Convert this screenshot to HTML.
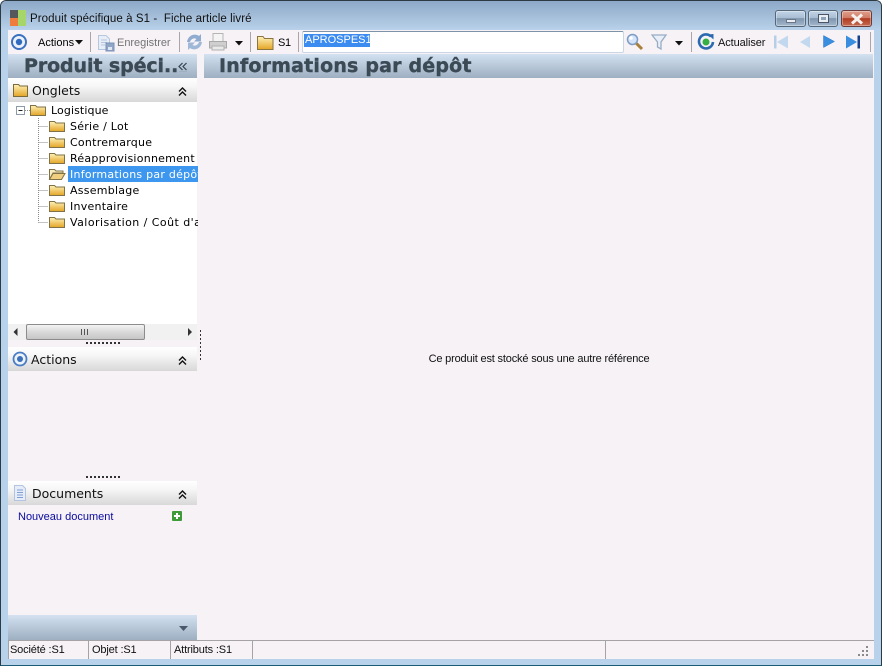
<!DOCTYPE html>
<html lang="fr"><head><meta charset="utf-8"><title>Fiche article livré</title>
<style>
html,body{margin:0;padding:0;width:882px;height:666px;overflow:hidden;background:#fff}
*{box-sizing:border-box}
.a{position:absolute;white-space:nowrap}
#win{position:absolute;left:0;top:0;width:882px;height:666px;overflow:hidden;border-radius:6px 6px 0 0;background:#b9d2ec;border:1px solid #2c3a44;border-bottom:1px solid #1d5a74}
#root{position:absolute;left:0;top:0;width:882px;height:666px;overflow:hidden;font-family:"Liberation Sans",sans-serif;font-size:11px;color:#000}
.sep{position:absolute;top:32px;width:1px;height:20px;background:#a9a6aa}
.t{font-family:"DejaVu Sans",sans-serif;font-size:11px;letter-spacing:.25px;line-height:16px;position:absolute;white-space:nowrap}
.hd{position:absolute;background:linear-gradient(#d3e1f1,#9dafc1)}
.bt{font-family:"DejaVu Sans",sans-serif;font-weight:bold;font-size:19px;color:#3b4a55;position:absolute;white-space:nowrap;line-height:24px;-webkit-text-stroke:.4px #3b4a55}
.ph{position:absolute;left:8px;width:189px;height:24px;background:linear-gradient(#fff 0%,#f7f6f7 35%,#d8d8d8 100%)}
.pt{position:absolute;font-family:"DejaVu Sans",sans-serif;font-size:12.5px;white-space:nowrap;line-height:24px;color:#111}
.dots{position:absolute;height:2px;width:36px;background:repeating-linear-gradient(90deg,#333 0 2px,transparent 2px 4px)}
.st{position:absolute;top:641px;height:18px;line-height:18px;white-space:nowrap;font-size:11px;letter-spacing:-.15px;color:#111}
.sl{position:absolute;top:641px;height:18px;width:1px;background:#a5a3a6}
.btn{position:absolute;top:10px;height:17px;border:1px solid #56677a;border-radius:3px;background:linear-gradient(#c3d4e6 0,#a9bdd3 45%,#7f95ad 50%,#a3b8cd 100%);box-shadow:inset 0 0 0 1px rgba(255,255,255,.35)}
</style></head><body>
<div id="root">
<div id="win"></div>
<div class="a" style="left:1px;top:1px;width:880px;height:29px;background:linear-gradient(#8da9c7,#b9d1ea);border-radius:5px 5px 0 0"></div>

<!-- Client background -->
<div class="a" style="left:8px;top:30px;width:866px;height:629px;background:#f6f2f6"></div>

<!-- Title bar -->
<svg class="a" style="left:10px;top:10px" width="16" height="16"><rect width="8" height="8" fill="#55585a"/><rect x="8" width="8" height="16" fill="#a6d66a"/><rect y="8" width="8" height="8" fill="#ee7c3c"/></svg>
<div class="a" style="left:30px;top:12px;font-size:11.5px;line-height:14px;letter-spacing:.08px;color:#101010">Produit spécifique à S1 -&nbsp; Fiche article livré</div>
<div class="btn" style="left:775px;width:31px"><div class="a" style="left:10px;top:8px;width:10px;height:4px;background:#e9eef4;border:1px solid #6a7686"></div></div>
<div class="btn" style="left:808px;width:30px"><div class="a" style="left:9px;top:3px;width:11px;height:9px;background:#e9eef4;border:1px solid #4a5666"></div><div class="a" style="left:12px;top:6px;width:5px;height:3px;background:#8ea3b8"></div></div>
<div class="btn" style="left:841px;width:31px;border-color:#6b3a3a;background:linear-gradient(#e0a08e 0,#d07c66 45%,#b03c22 50%,#c66a50 100%)">
<svg class="a" style="left:8px;top:2px" width="14" height="12"><path d="M2 1.500L12 10.500M12 1.500L2 10.500" stroke="#f3f0ee" stroke-width="3"/></svg></div>

<!-- Toolbar -->
<svg class="a" style="left:10px;top:33px" width="18" height="18"><circle cx="9" cy="9" r="7" fill="#eef3fa" stroke="#3a72c0" stroke-width="2"/><circle cx="9" cy="9" r="3.200" fill="#2f6cc0"/></svg>
<div class="a" style="left:38px;top:36px;line-height:14px">Actions</div>
<svg class="a" style="left:75px;top:40px" width="8" height="5"><path d="M0 0H8L4 4.500Z" fill="#111"/></svg>
<div class="sep" style="left:90px"></div>
<svg class="a" style="left:97px;top:34px" width="18" height="18"><path d="M1.500 1.500H9L12.500 5V15.500H1.500Z" fill="#e8eef7" stroke="#b6c6dc"/><path d="M4 6H10M4 8.500H10M4 11H8" stroke="#b4c4dc"/><rect x="9" y="9" width="8" height="8" fill="#8fa6c8" stroke="#7a90b4"/><rect x="11" y="13" width="4" height="3" fill="#dde6f2"/></svg>
<div class="a" style="left:117px;top:36px;line-height:14px;letter-spacing:-.02px;color:#747474">Enregistrer</div>
<div class="sep" style="left:179px"></div>
<svg class="a" style="left:186px;top:33px" width="17" height="18"><path d="M1 9C2 2 9 0 13 3L15 1V8.500H8L10.500 6C8 4.500 5 6 4 9Z" fill="#8fabcf"/><path d="M16 9C15 16 8 18 4 15L2 17V9.500H9L6.500 12C9 13.500 12 12 13 9Z" fill="#a0b8d8"/></svg>
<svg class="a" style="left:208px;top:32px" width="20" height="20"><rect x="5" y="1.500" width="10" height="8" fill="#f4f4f4" stroke="#b5b5b5"/><path d="M1.500 9.500H18.500V16H1.500Z" fill="#cfcfcf" stroke="#a9a9a9"/><rect x="4" y="14" width="12" height="4" fill="#e9e9e9" stroke="#b0b0b0"/></svg>
<svg class="a" style="left:235px;top:41px" width="8" height="5"><path d="M0 0H8L4 4.500Z" fill="#111"/></svg>
<div class="sep" style="left:250px"></div>
<svg class="a" style="left:257px;top:34px" width="17" height="16"><path d="M.5 2.500H6L7.500 4.500H16V15.500H.5Z" fill="url(#f1)" stroke="#8a7440"/><defs><linearGradient id="f1" x1="0" y1="0" x2="0" y2="1"><stop offset="0" stop-color="#fff2b8"/><stop offset="1" stop-color="#e3a424"/></linearGradient></defs></svg>
<div class="a" style="left:278px;top:36px;line-height:14px;letter-spacing:-.3px">S1</div>
<div class="sep" style="left:298px"></div>
<div class="a" style="left:302px;top:31px;width:322px;height:22px;background:#fff;border:1px solid #c8d6e6;border-top:1px solid #7d93a8;border-radius:2px"></div>
<div class="a" style="left:304px;top:34px;height:13px;width:66px;background:#3b8bf0"></div>
<div class="a" style="left:305px;top:33px;line-height:15px;font-size:11px;color:#fff;letter-spacing:0">APROSPES1</div>
<svg class="a" style="left:626px;top:33px" width="18" height="18"><path d="M10 10L16 16" stroke="#a8803c" stroke-width="3"/><circle cx="6.500" cy="6.500" r="5" fill="#d4e4fa" stroke="#7f9cc4" stroke-width="1.500"/><circle cx="5" cy="5" r="1.800" fill="#fff"/></svg>
<svg class="a" style="left:651px;top:33px" width="17" height="18"><path d="M1 2H15L10 9V16L6.500 14V9Z" fill="#e8eff8" stroke="#98adc4" stroke-width="1.300"/></svg>
<svg class="a" style="left:675px;top:41px" width="8" height="5"><path d="M0 0H8L4 4.500Z" fill="#111"/></svg>
<div class="sep" style="left:691px"></div>
<svg class="a" style="left:697px;top:33px" width="18" height="18"><path d="M14 3.500A7 7 0 1 0 16 9" fill="none" stroke="#2c6ab0" stroke-width="2.600"/><path d="M11 1.500L16.500 1V6.500Z" fill="#2c6ab0"/><circle cx="9" cy="9" r="3.500" fill="#34b044"/></svg>
<div class="a" style="left:718px;top:36px;line-height:14px;letter-spacing:-.1px;color:#111">Actualiser</div>
<svg class="a" style="left:773px;top:34px" width="16" height="16"><rect x="1" y="1.500" width="2.500" height="13" fill="#b6cfe8"/><path d="M15 1.500V14.500L4 8Z" fill="#c2d8ee"/></svg>
<svg class="a" style="left:798px;top:35px" width="14" height="14"><path d="M12 1V13L2 7Z" fill="#c2d8ee"/></svg>
<svg class="a" style="left:822px;top:34px" width="14" height="15"><path d="M1.500 1.500V13.500L12.500 7.500Z" fill="#3a8ee0" stroke="#2f78c4" stroke-width=".5"/></svg>
<svg class="a" style="left:845px;top:34px" width="16" height="16"><path d="M1 1.500V14.500L12 8Z" fill="#3a8ee0"/><rect x="12.500" y="1.500" width="2.500" height="13" fill="#16408c"/></svg>
<div class="sep" style="left:870px"></div>

<!-- Header bands -->
<div class="hd" style="left:8px;top:54px;width:189px;height:24px"></div>
<div class="hd" style="left:204px;top:54px;width:669px;height:24px"></div>
<div class="bt" style="left:24px;top:54px;width:154px;overflow:hidden;letter-spacing:-.1px">Produit spéci..</div>
<svg class="a" style="left:178px;top:62px" width="10" height="10"><path d="M4.500 1L1 4.500L4.500 8M8.500 1L5 4.500L8.500 8" fill="none" stroke="#34424e" stroke-width="1.200"/><path d="M1 9.500H9" stroke="#9fb0c0"/></svg>
<div class="bt" style="left:219px;top:54px;letter-spacing:.18px">Informations par dépôt</div>

<!-- Tree panel -->
<div class="a" style="left:8px;top:78px;width:189px;height:262px;background:#fff"></div>
<div class="ph" style="top:78px"></div>
<svg class="a" style="left:13px;top:83px" width="15" height="14"><path d="M.5 1.500H5.500L7 3H14.500V13.500H.5Z" fill="url(#f1)" stroke="#7a6a3c"/></svg>
<div class="pt" style="left:32px;top:79px">Onglets</div>
<svg class="a" style="left:178px;top:87px" width="9" height="10"><path d="M1 4.500L4.500 1L8 4.500M1 8.500L4.500 5L8 8.500" fill="none" stroke="#111" stroke-width="1.400"/></svg>

<!-- tree lines -->
<svg class="a" style="left:8px;top:102px" width="190" height="130">
<g fill="none" stroke="#8a8a8a" stroke-dasharray="1 1">
<path d="M30.500 16V120.500"/>
<path d="M30.500 24.500H40M30.500 40.500H40M30.500 56.500H40M30.500 72.500H40M30.500 88.500H40M30.500 104.500H40M30.500 120.500H40"/>
<path d="M17 8.500H22"/>
</g>
<rect x="8.500" y="4.500" width="8" height="8" fill="#fff" stroke="#8e9aa6"/><path d="M10.500 8.500H14.500" stroke="#222"/>
<g>
<path d="M22.500 3.500H27.500L29 5H37.500V13.500H22.500Z" fill="url(#f1)" stroke="#7f7247"/>
<path d="M41.500 19.500H46.500L48 21H56.500V29.500H41.500Z" fill="url(#f1)" stroke="#7f7247"/>
<path d="M41.500 35.500H46.500L48 37H56.500V45.500H41.500Z" fill="url(#f1)" stroke="#7f7247"/>
<path d="M41.500 51.500H46.500L48 53H56.500V61.500H41.500Z" fill="url(#f1)" stroke="#7f7247"/>
<path d="M41.500 67.500H46.500L48 69H55V71H45L41.500 77.500Z" fill="#f9ecc0" stroke="#7f7247"/><path d="M45 71.500H57L53.500 77.500H41.500Z" fill="#f0cf80" stroke="#7f7247"/>
<path d="M41.500 83.500H46.500L48 85H56.500V93.500H41.500Z" fill="url(#f1)" stroke="#7f7247"/>
<path d="M41.500 99.500H46.500L48 101H56.500V109.500H41.500Z" fill="url(#f1)" stroke="#7f7247"/>
<path d="M41.500 115.500H46.500L48 117H56.500V125.500H41.500Z" fill="url(#f1)" stroke="#7f7247"/>
</g>
</svg>
<div class="t" style="left:51px;top:103px;letter-spacing:.1px">Logistique</div>
<div class="t" style="left:70px;top:119px">Série / Lot</div>
<div class="t" style="left:70px;top:135px">Contremarque</div>
<div class="t" style="left:70px;top:151px">Réapprovisionnement</div>
<div class="a" style="left:68px;top:166px;width:130px;height:16px;background:#3d97ee"></div>
<div class="t" style="left:70px;top:167px;color:#fff;width:128px;overflow:hidden">Informations par dépôt</div>
<div class="t" style="left:70px;top:183px">Assemblage</div>
<div class="t" style="left:70px;top:199px">Inventaire</div>
<div class="t" style="left:70px;top:215px;width:128px;overflow:hidden;letter-spacing:.45px">Valorisation / Coût d'achat</div>

<!-- Scrollbar -->
<div class="a" style="left:8px;top:324px;width:189px;height:16px;background:#f2f1f2"></div>
<svg class="a" style="left:13px;top:328px" width="6" height="8"><path d="M4.500 0V8L.5 4Z" fill="#333"/></svg>
<svg class="a" style="left:187px;top:328px" width="6" height="8"><path d="M1 0V8L5 4Z" fill="#333"/></svg>
<div class="a" style="left:26px;top:324px;width:119px;height:16px;border:1px solid #8c8c8c;border-radius:2px;background:linear-gradient(#f4f4f4,#d9d9d9 50%,#c6c6c6)"></div>
<div class="a" style="left:81px;top:329px;width:7px;height:6px;background:repeating-linear-gradient(90deg,#555 0 1px,transparent 1px 3px)"></div>
<div class="dots" style="left:86px;top:342px"></div>
<div class="a" style="left:200px;top:330px;width:1px;height:32px;background:repeating-linear-gradient(#333 0 2px,transparent 2px 4px)"></div>

<!-- Actions panel -->
<div class="ph" style="top:347px"></div>
<svg class="a" style="left:12px;top:351px" width="16" height="16"><circle cx="8" cy="8" r="6.500" fill="#eef3fa" stroke="#4a7cc4" stroke-width="1.800"/><circle cx="8" cy="8" r="3" fill="#3a70bc"/></svg>
<div class="pt" style="left:31px;top:348px">Actions</div>
<svg class="a" style="left:178px;top:356px" width="9" height="10"><path d="M1 4.500L4.500 1L8 4.500M1 8.500L4.500 5L8 8.500" fill="none" stroke="#111" stroke-width="1.400"/></svg>
<div class="dots" style="left:86px;top:476px"></div>

<!-- Documents panel -->
<div class="ph" style="top:481px"></div>
<svg class="a" style="left:13px;top:485px" width="14" height="16"><path d="M1.500 .5H9.500L12.500 3.500V15.500H1.500Z" fill="#e6edf8" stroke="#b2c4e0"/><path d="M4 5H10M4 7.500H10M4 10H10M4 12.500H10" stroke="#7f9ed4"/></svg>
<div class="pt" style="left:32px;top:482px">Documents</div>
<svg class="a" style="left:178px;top:490px" width="9" height="10"><path d="M1 4.500L4.500 1L8 4.500M1 8.500L4.500 5L8 8.500" fill="none" stroke="#111" stroke-width="1.400"/></svg>
<div class="a" style="left:18px;top:510px;line-height:14px;font-size:11px;color:#0b0ba0">Nouveau document</div>
<svg class="a" style="left:172px;top:511px" width="10" height="10"><rect width="10" height="10" rx="1" fill="#3f9a3a"/><path d="M5 2V8M2 5H8" stroke="#fff" stroke-width="2"/></svg>

<!-- Bottom band -->
<div class="hd" style="left:8px;top:615px;width:189px;height:25px"></div>
<svg class="a" style="left:179px;top:626px" width="9" height="5"><path d="M0 0H9L4.500 5Z" fill="#49586a"/></svg>

<!-- Main message -->
<div class="a" style="left:204px;top:352px;width:670px;text-align:center;line-height:14px;font-size:11px;letter-spacing:-.17px;color:#111">Ce produit est stocké sous une autre référence</div>

<!-- Status bar -->
<div class="a" style="left:8px;top:640px;width:866px;height:1px;background:#a5a3a6"></div>
<div class="sl" style="left:8px"></div>
<div class="st" style="left:10px">Société :S1</div>
<div class="sl" style="left:88px"></div>
<div class="st" style="left:92px">Objet :S1</div>
<div class="sl" style="left:170px"></div>
<div class="st" style="left:174px">Attributs :S1</div>
<div class="sl" style="left:252px"></div>
<div class="sl" style="left:605px"></div>
<svg class="a" style="left:858px;top:646px" width="12" height="12" fill="#8a8a8a"><rect x="8" y="0" width="2" height="2"/><rect x="4" y="4" width="2" height="2"/><rect x="8" y="4" width="2" height="2"/><rect x="0" y="8" width="2" height="2"/><rect x="4" y="8" width="2" height="2"/><rect x="8" y="8" width="2" height="2"/></svg>
</div>
</body></html>
